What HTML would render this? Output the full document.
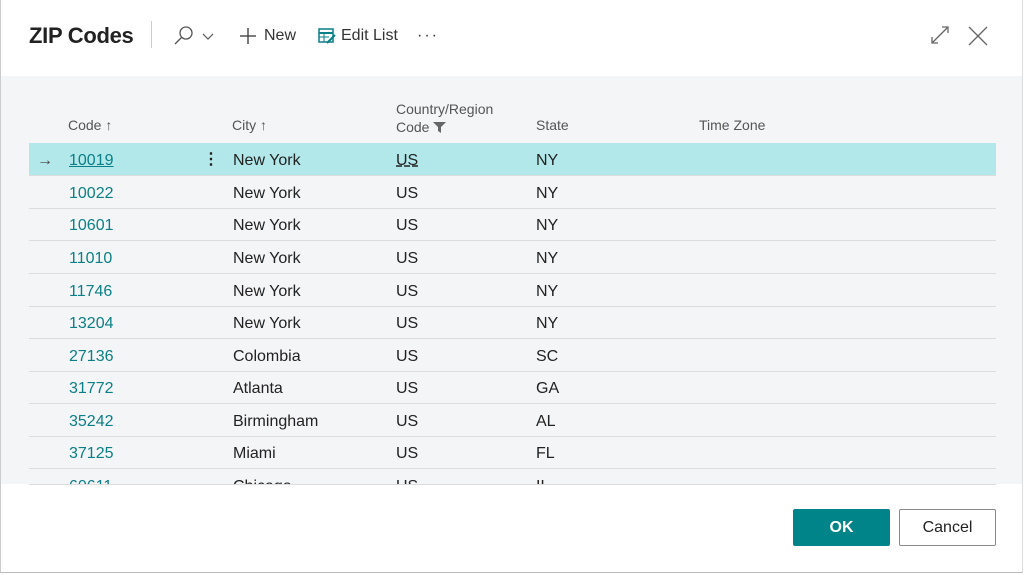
<!DOCTYPE html>
<html><head><style>
body{margin:0;width:1024px;height:575px;overflow:hidden;background:#fff;font-family:"Liberation Sans",sans-serif;position:relative}
.frame{position:absolute;left:0;top:0;width:1023px;height:573px;border-right:1px solid #ddd;border-bottom:1px solid #bbb;border-left:1px solid #ccc;box-sizing:border-box}
.title{position:absolute;left:29px;top:23px;font-size:22px;font-weight:bold;color:#222;letter-spacing:-0.3px}
.sep{position:absolute;left:151px;top:21px;width:1px;height:27px;background:#ccc}
.tb{position:absolute;top:27px;font-size:16px;color:#333}
.grey{position:absolute;left:1px;top:76px;width:1021px;height:408px;background:#f4f5f7}
.hdr{position:absolute;font-size:14px;color:#555}
.row{position:absolute;left:29px;width:967px;height:32px;border-bottom:1px solid #dcdcdc;font-size:16px;color:#222}
.row span{position:absolute;top:9px}
.row .c{left:40px;color:#0a7f86}
.btn{position:absolute;top:509px;height:37px;box-sizing:border-box;font-size:16px;text-align:center;line-height:37px;border-radius:2px}
</style></head><body>
<div class="grey"></div>
<div class="frame"></div>
<div class="title">ZIP Codes</div>
<div class="sep"></div>
<svg style="position:absolute;left:172px;top:25px" width="46" height="22"><circle cx="14" cy="8" r="6" fill="none" stroke="#555" stroke-width="1.3"/><line x1="10" y1="12" x2="3" y2="19" stroke="#555" stroke-width="1.3"/><polyline points="31,9 36,14 41,9" fill="none" stroke="#555" stroke-width="1.2"/></svg>
<svg style="position:absolute;left:239px;top:27px" width="20" height="18"><line x1="9" y1="1" x2="9" y2="17" stroke="#444" stroke-width="1.4"/><line x1="1" y1="9" x2="17" y2="9" stroke="#444" stroke-width="1.4"/></svg>
<div class="tb" style="left:264px">New</div>
<svg style="position:absolute;left:318px;top:27px" width="18" height="18"><rect x="1" y="2" width="14" height="13" fill="none" stroke="#0a7f86" stroke-width="1.5"/><line x1="1" y1="6" x2="15" y2="6" stroke="#0a7f86" stroke-width="2"/><line x1="1" y1="10" x2="11" y2="10" stroke="#0a7f86"/><line x1="6" y1="6" x2="6" y2="15" stroke="#0a7f86"/><line x1="9" y1="16" x2="17" y2="8" stroke="#0a7f86" stroke-width="2"/></svg>
<div class="tb" style="left:341px">Edit List</div>
<div class="tb" style="left:417px;top:27px;letter-spacing:2px">···</div>
<svg style="position:absolute;left:930px;top:25px" width="60" height="22"><g stroke="#666" stroke-width="1.3" fill="none"><line x1="2" y1="18" x2="18" y2="2"/><polyline points="2,12 2,18 8,18"/><polyline points="12,2 18,2 18,8"/><line x1="39" y1="2" x2="57" y2="20"/><line x1="57" y1="2" x2="39" y2="20"/></g></svg>
<div class="hdr" style="left:68px;top:117px">Code ↑</div>
<div class="hdr" style="left:232px;top:117px">City ↑</div>
<div class="hdr" style="left:396px;top:101px">Country/Region</div>
<div class="hdr" style="left:396px;top:119px">Code <svg width="13" height="11" style="vertical-align:-1px"><path d="M0 0H13L8 5V11L5 9V5Z" fill="#666"/></svg></div>
<div class="hdr" style="left:536px;top:117px">State</div>
<div class="hdr" style="left:699px;top:117px">Time Zone</div>

<div class="row" style="top:143px;background:#b2e8ea"><span style="left:8px;color:#444">→</span><span class="c" style="text-decoration:underline">10019</span><span style="left:174px;font-weight:bold;top:6px">⋮</span><span style="left:204px">New York</span><span style="left:367px;text-decoration:underline dashed">US</span><span style="left:507px">NY</span></div>
<div class="row" style="top:176px"><span class="c">10022</span><span style="left:204px">New York</span><span style="left:367px">US</span><span style="left:507px">NY</span></div>
<div class="row" style="top:208px"><span class="c">10601</span><span style="left:204px">New York</span><span style="left:367px">US</span><span style="left:507px">NY</span></div>
<div class="row" style="top:241px"><span class="c">11010</span><span style="left:204px">New York</span><span style="left:367px">US</span><span style="left:507px">NY</span></div>
<div class="row" style="top:274px"><span class="c">11746</span><span style="left:204px">New York</span><span style="left:367px">US</span><span style="left:507px">NY</span></div>
<div class="row" style="top:306px"><span class="c">13204</span><span style="left:204px">New York</span><span style="left:367px">US</span><span style="left:507px">NY</span></div>
<div class="row" style="top:339px"><span class="c">27136</span><span style="left:204px">Colombia</span><span style="left:367px">US</span><span style="left:507px">SC</span></div>
<div class="row" style="top:371px"><span class="c">31772</span><span style="left:204px">Atlanta</span><span style="left:367px">US</span><span style="left:507px">GA</span></div>
<div class="row" style="top:404px"><span class="c">35242</span><span style="left:204px">Birmingham</span><span style="left:367px">US</span><span style="left:507px">AL</span></div>
<div class="row" style="top:436px"><span class="c">37125</span><span style="left:204px">Miami</span><span style="left:367px">US</span><span style="left:507px">FL</span></div>
<div style="position:absolute;left:29px;top:469px;width:967px;height:16px;overflow:hidden"><div class="row" style="top:0;left:0"><span class="c">60611</span><span style="left:204px">Chicago</span><span style="left:367px">US</span><span style="left:507px">IL</span></div></div>
<div style="position:absolute;left:29px;top:484px;width:967px;height:1px;background:#dcdcdc"></div>

<div class="btn" style="left:793px;width:97px;background:#008489;color:#fff;font-weight:bold">OK</div>
<div class="btn" style="left:899px;width:97px;border:1px solid #8a8a8a;color:#222;line-height:35px">Cancel</div>
</body></html>
